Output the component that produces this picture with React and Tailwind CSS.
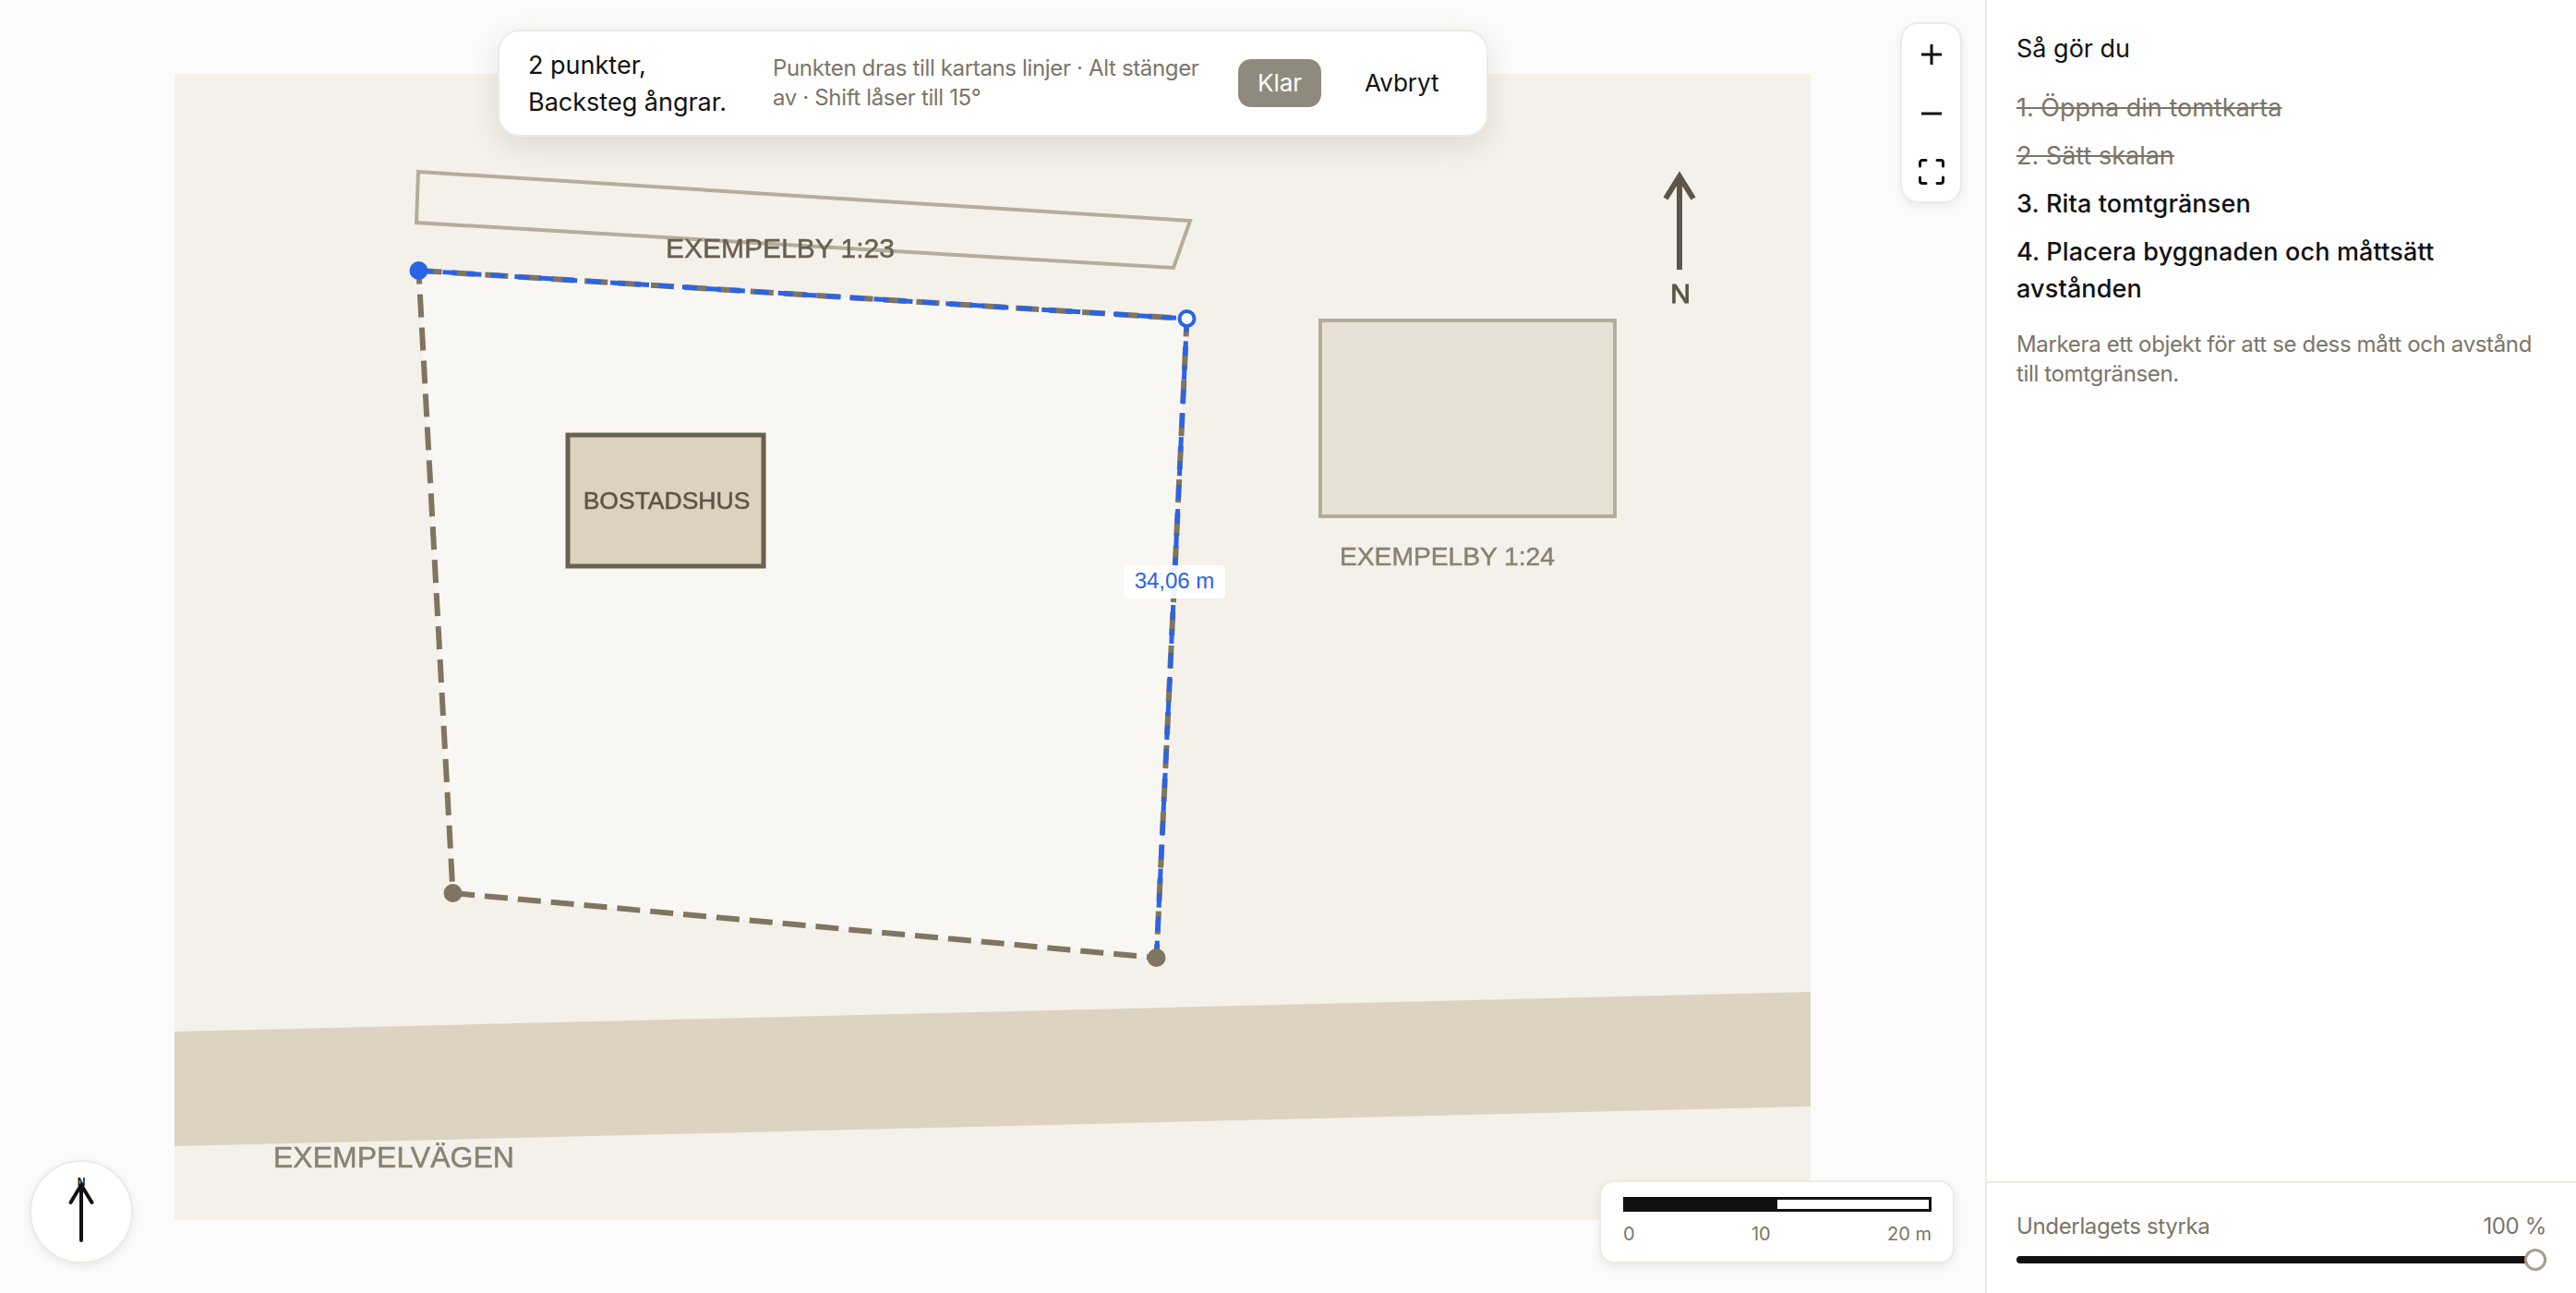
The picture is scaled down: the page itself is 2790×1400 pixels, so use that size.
import React from "react";

const sans = "font-['Inter','Liberation_Sans',sans-serif]";

function MapDrawing() {
  const outline = "453.5,292 1285.5,344 1252.5,1036 490.5,966";
  return (
    <svg width="1772" height="1241" viewBox="189 79 1772 1241" className="block">
      <defs>
        <filter id="soft" x="-5%" y="-5%" width="110%" height="110%">
          <feGaussianBlur stdDeviation="0.55" />
        </filter>
      </defs>
      <g filter="url(#soft)">
        <polygon points="189,1116 1961,1073 1961,1197 189,1240" fill="#dcd3c0" />
        <polygon points="453,185 1289,238 1271,289 451,240" fill="none" stroke="#b5ac99" strokeWidth="4" />
        <polygon points={outline} fill="#f9f7f3" />
        <rect x="1430" y="346" width="319" height="212" fill="#e8e1d6" stroke="#b5ac99" strokeWidth="4" />
        <rect x="615" y="470" width="212" height="142" fill="#dbd2bf" stroke="#6b6150" strokeWidth="5" />
        <g fontFamily="'Liberation Sans',Arial,sans-serif" strokeWidth="0.5">
          <text x="721" y="278" fontSize="30" fill="#6b6150" stroke="#6b6150">EXEMPELBY 1:23</text>
          <text x="722" y="550" fontSize="26.5" textAnchor="middle" fill="#5d5546" stroke="#5d5546">BOSTADSHUS</text>
          <text x="1451" y="611" fontSize="28.2" fill="#8a8272" stroke="#8a8272">EXEMPELBY 1:24</text>
          <text x="296" y="1263" fontSize="32" fill="#8a8272" stroke="#8a8272">EXEMPELVÄGEN</text>
          <text x="1820" y="327" fontSize="30" textAnchor="middle" fill="#5d5546" stroke="#5d5546" strokeWidth="1">N</text>
        </g>
        <path d="M1819 291V194M1804 214L1819 190L1834 214" fill="none" stroke="#5d5546" strokeWidth="6" />
      </g>
      <polygon points={outline} fill="none" stroke="#7f7561" strokeWidth="6" strokeDasharray="25 11" filter="url(#soft)" />
      <polyline points="453.5,292 1285.5,344 1252.5,1036" fill="none" stroke="#2a63e6" strokeWidth="5" strokeDasharray="16 10" />
      <circle cx="490.5" cy="966" r="10" fill="#7f7561" />
      <circle cx="1252.5" cy="1036" r="10" fill="#7f7561" />
      <circle cx="453.5" cy="292" r="10" fill="#2a63e6" />
      <circle cx="1285.5" cy="344" r="8" fill="#ffffff" stroke="#2a63e6" strokeWidth="4" />
      <rect x="1217" y="611" width="110" height="36" rx="5" fill="#ffffff" fillOpacity="0.92" />
      <text x="1272" y="636" fontSize="24" textAnchor="middle" fill="#2a63e6" fontFamily="'Liberation Sans',Arial,sans-serif">34,06 m</text>
    </svg>
  );
}

function ZoomControls() {
  return (
    <div className="absolute left-[2058px] top-[24px] flex h-[196px] w-[67px] flex-col items-center rounded-[20px] border-2 border-[#ecebe5] bg-white pt-[21px] shadow-[0_4px_8px_rgba(90,80,60,0.08)]">
      <svg width="24" height="24" viewBox="0 0 24 24" fill="none" stroke="#111" strokeWidth="3">
        <path d="M12 1V23M1 12H23" />
      </svg>
      <svg className="mt-[40px]" width="24" height="24" viewBox="0 0 24 24" fill="none" stroke="#111" strokeWidth="3">
        <path d="M1 12H23" />
      </svg>
      <svg className="mt-[37px]" width="28" height="28" viewBox="0 0 28 28" fill="none" stroke="#111" strokeWidth="3" strokeLinecap="round">
        <path d="M1.5 8V4A2.5 2.5 0 0 1 4 1.5H8M20 1.5H24A2.5 2.5 0 0 1 26.5 4V8M26.5 20V24A2.5 2.5 0 0 1 24 26.5H20M8 26.5H4A2.5 2.5 0 0 1 1.5 24V20" />
      </svg>
    </div>
  );
}

function DrawBar() {
  return (
    <div className="absolute left-[539px] top-[32px] flex h-[116px] w-[1073px] items-center rounded-[24px] border-2 border-[#ecebe5] bg-white pl-[31px] shadow-[0_10px_30px_rgba(90,80,60,0.14)]">
      <div className="w-[265px] pt-[2px] text-[27px] leading-[40px] text-[#111]">
        2 punkter,
        <br />
        Backsteg ångrar.
      </div>
      <div className="mr-[30px] w-[474px] text-[24px] leading-[32px] tracking-[-0.35px] text-[#7a7568]">
        Punkten dras till kartans linjer · Alt stänger av · Shift låser till 15°
      </div>
      <div className="flex h-[52px] w-[90px] items-center justify-center rounded-[14px] bg-[#8f8a7e] pb-[2px] text-[26px] text-white">Klar</div>
      <div className="mb-[2px] ml-[47px] text-[26px] text-[#111]">Avbryt</div>
    </div>
  );
}

function ScaleCard() {
  return (
    <div className="absolute left-[1732px] top-[1278px] h-[90px] w-[385px] rounded-[16px] border-2 border-[#ecebe5] bg-white pl-[24px] pr-[23px] pt-[16px] shadow-[0_4px_8px_rgba(90,80,60,0.1)]">
      <div className="flex h-[16px] border-[3px] border-[#111]">
        <div className="w-1/2 bg-[#111]" />
      </div>
      <div className="mt-[10px] flex justify-between text-[20px] leading-[28px] text-[#7a7568]">
        <span>0</span>
        <span>10</span>
        <span>20 m</span>
      </div>
    </div>
  );
}

function Compass() {
  return (
    <div className="absolute left-[32px] top-[1256px] flex h-[112px] w-[112px] items-center justify-center rounded-full border-2 border-[#ecebe5] bg-white shadow-[0_3px_8px_rgba(90,80,60,0.1)]">
      <svg width="60" height="84" viewBox="0 0 60 84">
        <text x="30" y="14" fontSize="12" fontWeight="700" textAnchor="middle" fill="#111" fontFamily="'Liberation Sans',Arial,sans-serif">N</text>
        <path d="M30 73V13M18.5 32L30 13L41.5 32" fill="none" stroke="#111" strokeWidth="4" strokeLinecap="round" />
      </svg>
    </div>
  );
}

function Panel() {
  return (
    <aside className="flex w-[640px] flex-col border-l-2 border-[#ecebe5] bg-white">
      <div className="flex-1 pl-[32px] pr-[32px] pt-[33px]">
        <h2 className="text-[27px] font-normal leading-[40px] text-[#111]">Så gör du</h2>
        <ol className="mt-[24px] flex flex-col gap-[12px] text-[27px] leading-[40px]">
          <li className="text-[#7a7568] line-through">1. Öppna din tomtkarta</li>
          <li className="text-[#7a7568] line-through">2. Sätt skalan</li>
          <li className="font-medium tracking-[0.15px] text-[#111]">3. Rita tomtgränsen</li>
          <li className="font-medium tracking-[0.15px] text-[#111]">4. Placera byggnaden och måttsätt avstånden</li>
        </ol>
        <p className="mt-[24px] text-[24px] leading-[32px] tracking-[-0.35px] text-[#7a7568]">
          Markera ett objekt för att se dess mått och avstånd till tomtgränsen.
        </p>
      </div>
      <div className="h-[121px] border-t-2 border-[#ecebe5] pl-[32px] pr-[32px] pt-[31px]">
        <div className="flex justify-between text-[24px] leading-[32px] tracking-[-0.35px] text-[#7a7568]">
          <span>Underlagets styrka</span>
          <span>100 %</span>
        </div>
        <div className="relative mt-[16px] h-[8px] rounded-full bg-[#111]">
          <div className="absolute -top-[8px] right-0 h-[24px] w-[24px] rounded-full border-[3px] border-[#a69f8f] bg-white" />
        </div>
      </div>
    </aside>
  );
}

export default function App() {
  return (
    <div className={`flex h-[1400px] w-[2790px] overflow-hidden bg-[#fbfbfb] ${sans}`}>
      <main className="relative flex flex-1 items-center justify-center">
        <div className="h-[1241px] w-[1772px] bg-[#f4f1ea]">
          <MapDrawing />
        </div>
        <DrawBar />
        <ZoomControls />
        <ScaleCard />
        <Compass />
      </main>
      <Panel />
    </div>
  );
}
